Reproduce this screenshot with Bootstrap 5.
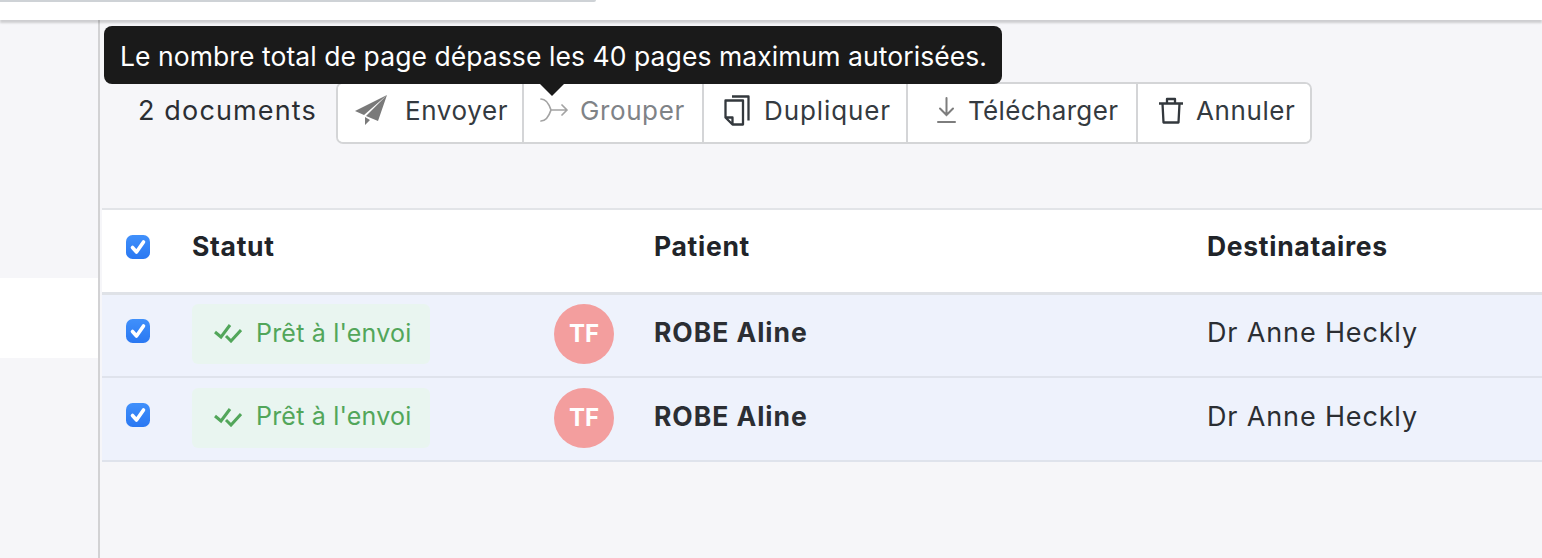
<!DOCTYPE html>
<html lang="fr">
<head>
<meta charset="utf-8">
<title>Documents</title>
<link rel="stylesheet" href="https://cdn.jsdelivr.net/npm/bootstrap@5.3.0/dist/css/bootstrap.min.css">
<style>
html,body{height:558px;overflow:hidden}
body{background:#f6f6f9;font-family:Inter,"Liberation Sans",sans-serif;color:#2b2e33;position:relative}
.topstrip{height:20px;background:#fff;box-shadow:0 3px 2px rgba(0,0,0,.16);position:relative;z-index:2}
.topinput{width:596px;height:2px;background:#ced2d6;border-radius:0 0 3px 0}
.shell{height:538px}
.sidepane{width:100px;flex:none;border-right:2px solid #d2d2d4;padding-top:258px}
.sideactive{height:80px;background:#fff}
.mainpane{min-width:0}
.toolrow{height:188px;padding-top:62px;padding-left:38px}
.doccount{font-size:27px;line-height:57px;width:198px;letter-spacing:1.15px;color:#2b2e33;white-space:nowrap}
.tools{height:62px;background:#fff;border:2px solid #d4d5d7;border-radius:7px}
.tools .btn{--bs-btn-border-width:0;font-size:26px;letter-spacing:.6px;color:#343a40;background:#fff;padding:0 0 6px;margin-left:0!important;border-radius:0;display:flex;align-items:center;flex:none;border-right:2px solid #d4d5d7;height:58px;opacity:1}
.tools .btn:last-child{border-right:0;border-radius:0 5px 5px 0}
.tools .btn:first-child{border-radius:5px 0 0 5px}
.tools .btn.muted{color:#7f8387}
.b1{width:186px;padding-left:16px!important;gap:17px}
.b2{width:180px;padding-left:16px!important;gap:12px}
.tools .b3{width:204px;padding-left:20px!important;gap:14px;letter-spacing:.9px}
.tools .b4{width:230px;padding-left:29px!important;gap:12px;letter-spacing:.35px}
.b5{width:172px;padding-left:21px!important;gap:13px}
.doc-table{--bs-table-bg:transparent;table-layout:fixed;width:calc(100% - 2px);margin:0 0 0 2px;font-size:27px;letter-spacing:.85px;border-top:2px solid #e2e4e8}
.doc-table th,.doc-table td{padding:0 0 4px;vertical-align:middle;color:#2b2e33;border:0}
.doc-table thead th{background:#fff;height:84px;padding-bottom:8px;font-size:26.5px;font-weight:700;letter-spacing:.7px;border-bottom:3px solid #dfe2e7;color:#212429}
.doc-table tbody td{background:#eef2fc;height:84px;border-bottom:2px solid #dfe3ec}
.doc-table tbody td:first-child{padding-bottom:8px}
.doc-table tbody td.cellflush{padding-bottom:2px}
.chk{width:24px;height:24px;margin:0 0 0 24px;display:block;border-radius:5px;border:0;float:none;background-color:#2f80f8;background-size:100% 100%}
.chk:checked{background-color:#2f80f8;background-image:url("data:image/svg+xml,%3csvg xmlns='http://www.w3.org/2000/svg' viewBox='0 0 24 24'%3e%3cpath fill='none' stroke='%23fff' stroke-width='3.6' stroke-linecap='round' stroke-linejoin='round' d='M6.500 12.500l4 4.500 7-10'/%3e%3c/svg%3e"),linear-gradient(#4090fb,#2a78f2)}
.statepill{width:238px;height:60px;background:#e9f5f0;border-radius:6px;color:#52a65a;display:flex;align-items:center;padding:0 0 2px 22px;gap:14px;font-size:25px;letter-spacing:.2px}
.avatarchip{width:60px;height:60px;border-radius:50%;background:#f39e9e;color:#fff;font-weight:700;font-size:24px;letter-spacing:0;display:flex;align-items:center;justify-content:center}
.tipbox{position:absolute;left:104px;top:26px;width:898px;height:58px;background:#1a1a1a;color:#fff;border-radius:8px;font-size:26.5px;line-height:60px;padding-left:16px;white-space:nowrap;z-index:5;letter-spacing:.07px}
.tipbox::after{content:"";position:absolute;left:436px;top:58px;border:12px solid transparent;border-bottom:0;border-top-color:#1a1a1a}
.doc-table .pname{font-weight:700;font-size:26.500px;letter-spacing:.95px}
</style>
</head>
<body>
<div class="topstrip"><div class="topinput"></div></div>
<div class="shell d-flex">
  <aside class="sidepane"><div class="sideactive"></div></aside>
  <main class="mainpane flex-grow-1">
    <div class="toolrow d-flex">
      <div class="doccount">2 documents</div>
      <div class="tools btn-group" role="group">
        <button type="button" class="btn b1"><svg width="34" height="32" viewBox="0 0 34 32"><path fill="#7a7a7a" d="M33 1 1 17l9 4zM33 1 12 22l12 5zM11 23v8l5-5z"/></svg>Envoyer</button>
        <button type="button" class="btn muted b2"><svg width="28" height="24" viewBox="0 0 28 24" fill="none" stroke="#a3a3a3" stroke-width="1.700" stroke-linecap="round" stroke-linejoin="round"><path d="M1 1c5 0 8 5 10 11-2 6-5 11-10 11M11 12h16M22 7l5 5-5 5"/></svg>Grouper</button>
        <button type="button" class="btn b3"><svg width="26" height="31" viewBox="0 0 26 31" fill="none" stroke="#33383d" stroke-width="2.300" stroke-linejoin="round"><path d="M8 1.500h16.500v24M1.500 5.500h17.500v24H8.500l-7-7zM1.500 22.500h7v7"/></svg>Dupliquer</button>
        <button type="button" class="btn b4"><svg width="19" height="26" viewBox="0 0 19 26" fill="none" stroke="#7d7d7d" stroke-width="2" stroke-linecap="round"><path d="M9.500 1v17M3 11.500l6.500 6.500 6.500-6.500"/><path d="M1 25h17"/></svg>Télécharger</button>
        <button type="button" class="btn b5"><svg width="24" height="27" viewBox="0 0 24 27" fill="none" stroke="#33383d" stroke-width="2.300" stroke-linejoin="round"><path d="M0 6.500h24M8 6.500V2h8v4.500M3.500 6.500l1 19h15l1-19"/></svg>Annuler</button>
      </div>
    </div>
    <table class="table doc-table">
      <colgroup><col style="width:90px"><col style="width:362px"><col style="width:100px"><col style="width:553px"><col></colgroup>
      <thead><tr><th><input class="form-check-input chk" type="checkbox" checked aria-label="Tout"></th><th>Statut</th><th></th><th>Patient</th><th>Destinataires</th></tr></thead>
      <tbody>
        <tr><td><input class="form-check-input chk" type="checkbox" checked aria-label="Ligne 1"></td><td class="cellflush"><div class="statepill"><svg width="28" height="20" viewBox="0 0 28 20" fill="none" stroke="#52a65a" stroke-width="3"><path d="M1 9l6 5 9-12M12 13l5 5 10-11"/></svg>Prêt à l'envoi</div></td><td class="cellflush"><div class="avatarchip">TF</div></td><td class="pname">ROBE Aline</td><td>Dr Anne Heckly</td></tr>
        <tr><td><input class="form-check-input chk" type="checkbox" checked aria-label="Ligne 2"></td><td class="cellflush"><div class="statepill"><svg width="28" height="20" viewBox="0 0 28 20" fill="none" stroke="#52a65a" stroke-width="3"><path d="M1 9l6 5 9-12M12 13l5 5 10-11"/></svg>Prêt à l'envoi</div></td><td class="cellflush"><div class="avatarchip">TF</div></td><td class="pname">ROBE Aline</td><td>Dr Anne Heckly</td></tr>
      </tbody>
    </table>
  </main>
</div>
<div class="tipbox" role="tooltip">Le nombre total de page dépasse les 40 pages maximum autorisées.</div>
<script src="https://cdn.jsdelivr.net/npm/bootstrap@5.3.0/dist/js/bootstrap.bundle.min.js"></script>
</body>
</html>
